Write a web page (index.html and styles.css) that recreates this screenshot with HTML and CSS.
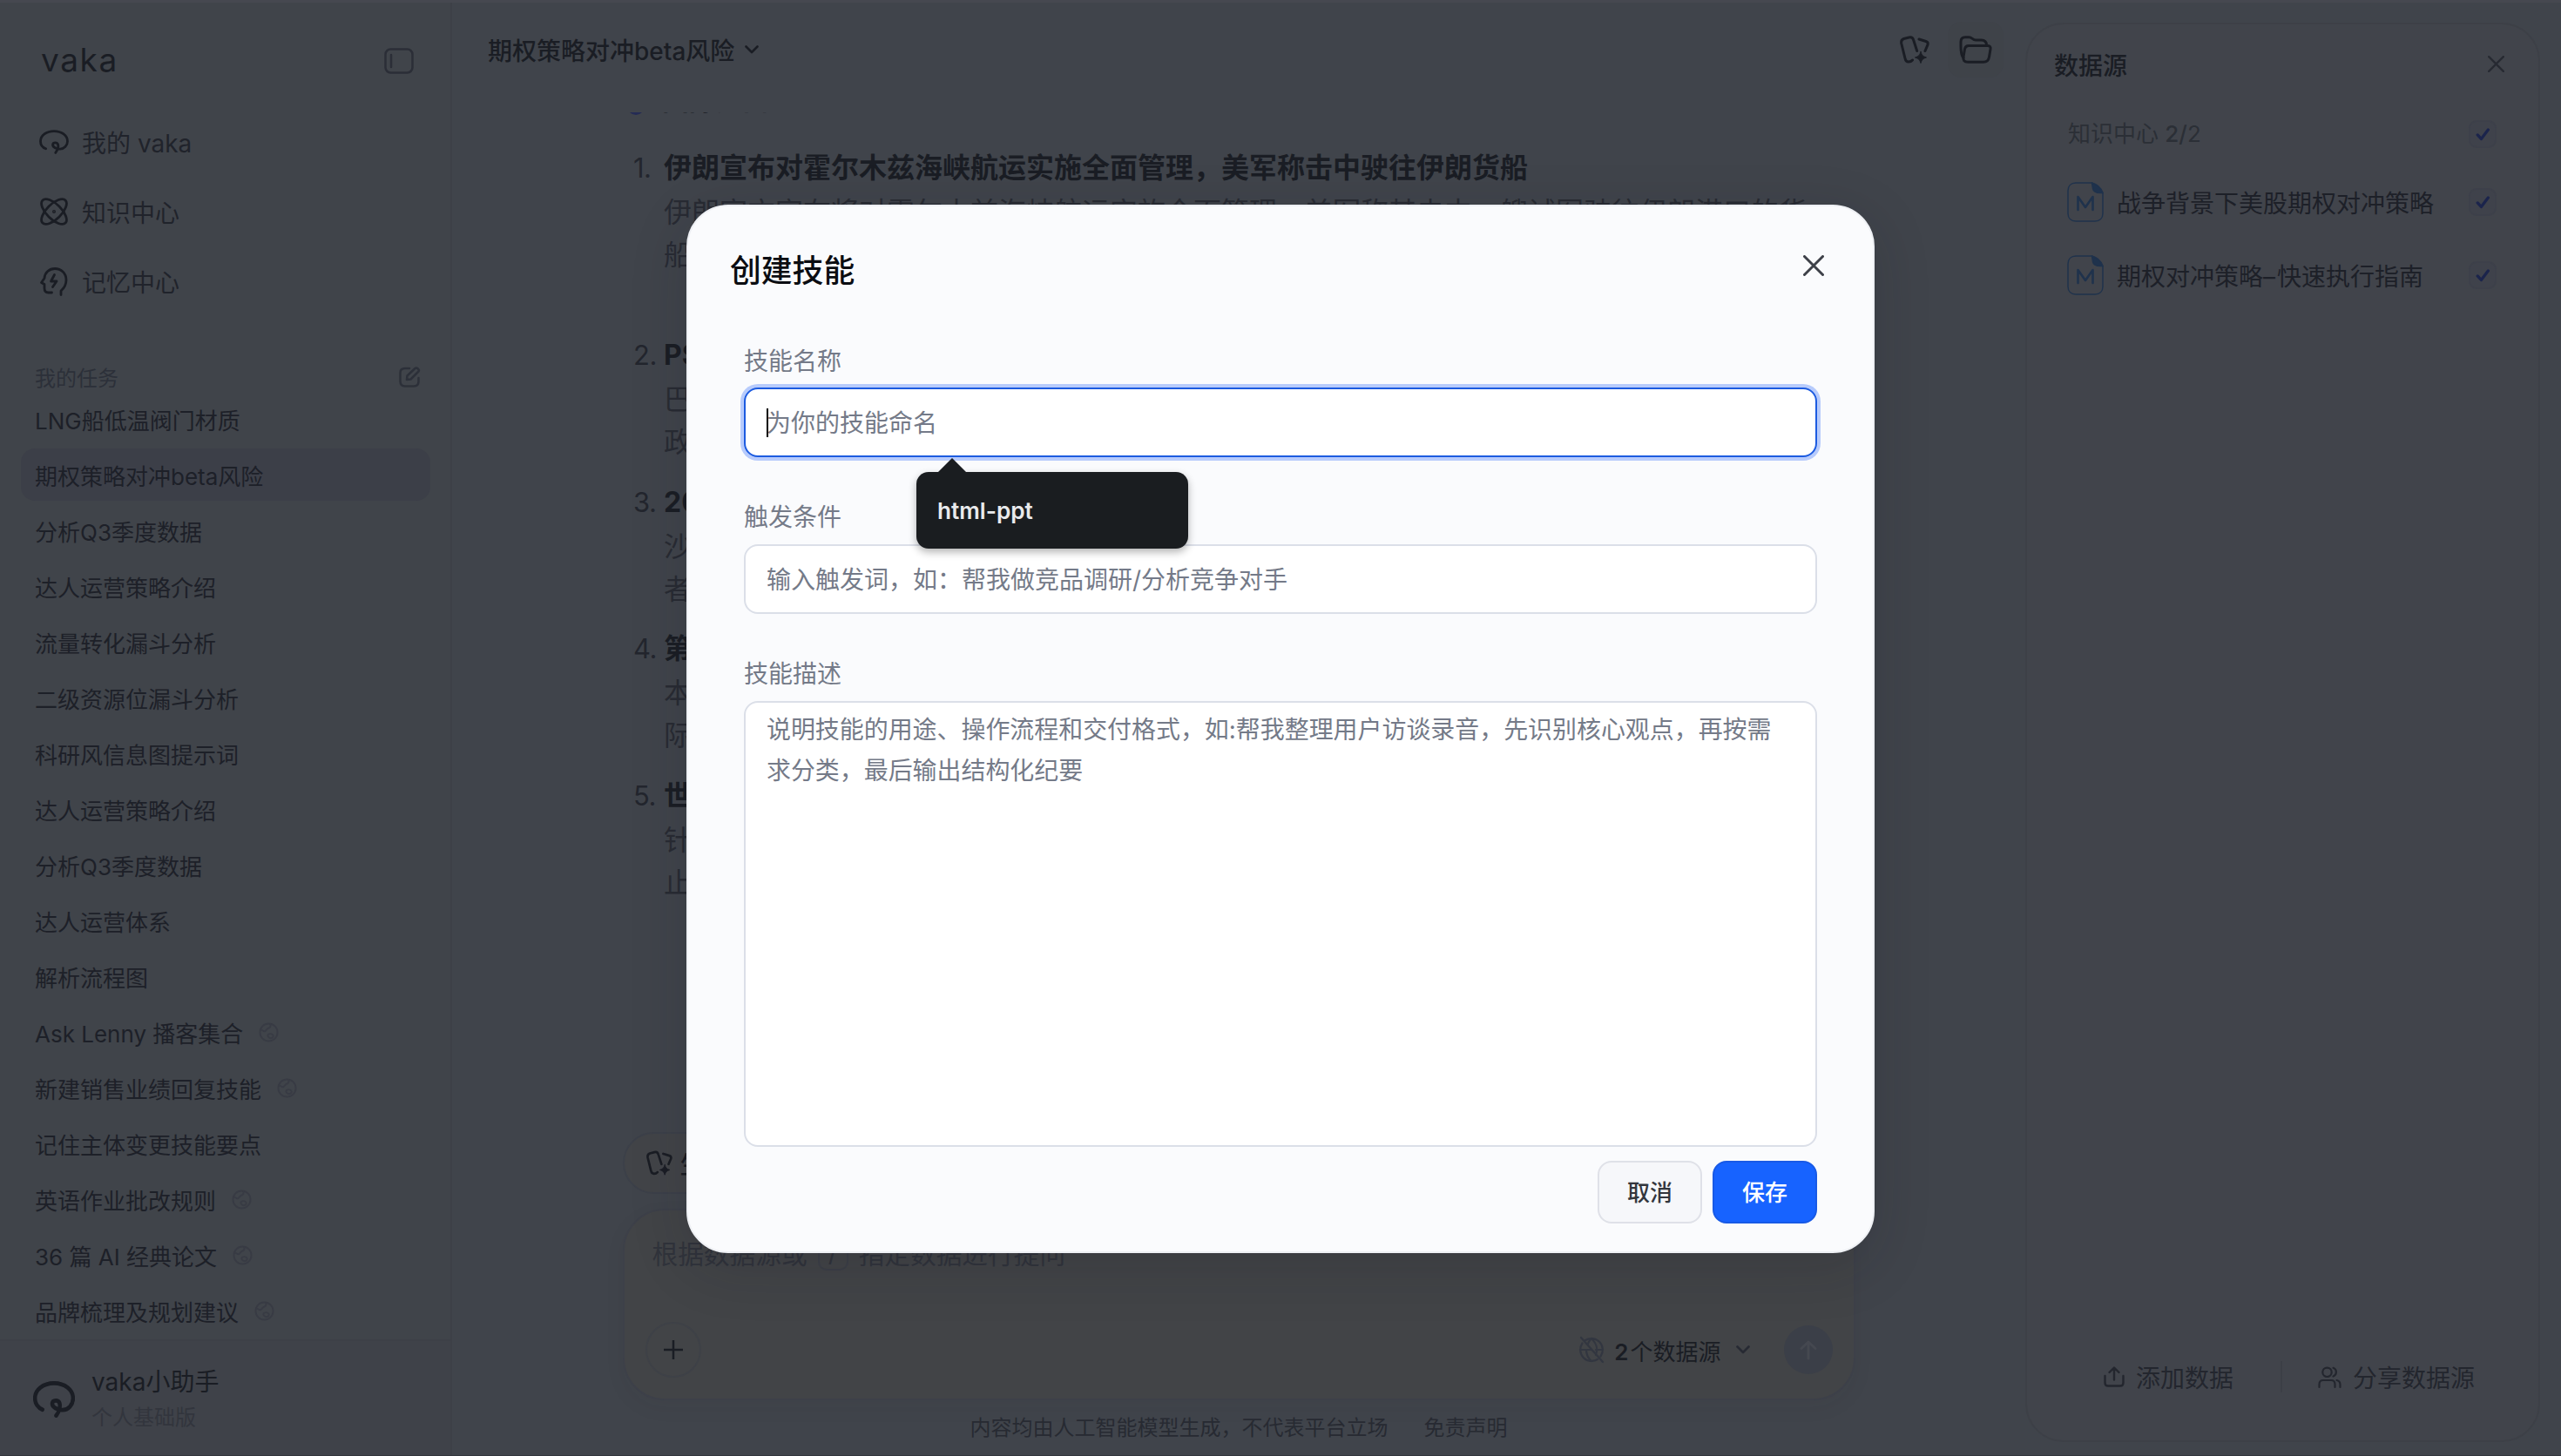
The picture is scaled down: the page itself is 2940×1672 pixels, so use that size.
FILE: index.html
```html
<!DOCTYPE html>
<html lang="zh-CN">
<head>
<meta charset="utf-8">
<title>vaka</title>
<link rel="stylesheet" href="styles.css">
</head>
<body>
<svg class="sprite" aria-hidden="true">
  <symbol id="i-logo" viewBox="0 0 34 28"><path d="M7.6 21.8C4 20.4 1.5 17 1.5 13.2 1.5 6.7 8.2 1.6 17 1.6S32.5 6.7 32.5 13.2c0 5-4 9-8.6 8.9-3.6 0-8.8-2-8.3-5.2.4-2.6 5-2.8 5.9-.1.8 2.600-.3 6.600-2.700 9.600"/></symbol>
  <symbol id="i-globe" viewBox="0 0 24 24"><circle cx="12" cy="12" r="10.500"/><path d="M2.500 9c2-.5 3 2.500 5 1.500s2-3 4-3.500 3-2 2.500-5M11 15c1.500-2 4.500-1.500 6 0s-.5 4-2.500 4-4.500-2.500-3.500-4z"/></symbol>
  <symbol id="i-cards" viewBox="0 0 34 32"><path d="M14.500 28c-1 1.200-2.500 2-4.500 2-2.500 0-3.500-1.500-4-4L1.800 9C1.300 6.500 2 4.500 4.500 3.500l6-1.500c3-.8 4.500.5 5.200 3l4 12.500M22 4l8 2.500c1.800.6 2.500 2 2 3.800L29 17.500"/><path class="spark" d="M24 18.500c1.200 4 2.300 5.200 6.500 6.500-4.200 1.300-5.300 2.500-6.500 6.500-1.200-4-2.300-5.200-6.500-6.500 4.200-1.300 5.300-2.500 6.500-6.500z"/></symbol>
  <symbol id="i-check" viewBox="0 0 20 18"><path d="M2.500 9.500l5 5.500L17 2.500"/></symbol>
  <symbol id="i-close" viewBox="0 0 24 24"><path d="M1.500 1.500l21 21M22.500 1.500l-21 21"/></symbol>
  <symbol id="i-down" viewBox="0 0 16 10"><path d="M1.500 1.500L8 8l6.500-6.500"/></symbol>
  <symbol id="i-md" viewBox="0 0 42 46"><path d="M10 1h18.500c5 2 9.500 6.500 12.500 11.500V36c0 5.500-3.500 9-9 9H10c-5.500 0-9-3.500-9-9V10c0-5.500 3.500-9 9-9z"/><path class="solid" d="M28.500 1c6 1.500 10.500 6 12.500 11.500-6 .5-11-1-11.500-5z"/><path class="m" d="M12.500 32V17l8.500 12 8.500-12v15"/></symbol>
</svg>

<div class="app">
  <aside class="sidebar">
    <div class="brand"><span class="brand-name">vaka</span>
      <svg class="icon toggle" viewBox="0 0 34 30"><rect x="1.500" y="1.500" width="31" height="27" rx="6"/><path d="M8 8v14"/></svg>
    </div>
    <nav class="nav">
      <a class="nav-item"><svg class="icon nav-icon logo"><use href="#i-logo"/></svg>我的 vaka</a>
      <a class="nav-item"><svg class="icon nav-icon" viewBox="0 0 34 32"><ellipse cx="17" cy="16" rx="18.500" ry="8.500" transform="rotate(45 17 16)"/><ellipse cx="17" cy="16" rx="18.500" ry="8.500" transform="rotate(-45 17 16)"/><circle class="solid" cx="17" cy="16" r=".6"/></svg>知识中心</a>
      <a class="nav-item"><svg class="icon nav-icon" viewBox="0 0 34 32"><path d="M25 31.500V27c4-3.500 6-8 6-12.500C31 6.500 25 1.500 18 1.500 11.500 1.500 6.500 6 6 12.500l-3.500 5 3.500 2v4.500c0 3.500 1.500 5 4.500 5h4"/><path d="M17.500 8.500l-4 7.500h6.500l-4.500 6.500"/></svg>记忆中心</a>
    </nav>
    <div class="tasks-head"><span>我的任务</span>
      <svg class="icon edit" viewBox="0 0 24 24"><path d="M12 2H7C3.500 2 1.500 4 1.500 7v10c0 3.500 2 5.500 5.500 5.500h10c3.500 0 5.500-2 5.500-5.500v-4M9 15l.5-4.500L18.500 2c2-1.500 5.500 1.500 4 3.500l-9 9z"/></svg>
    </div>
    <ul class="tasks">
      <li>LNG船低温阀门材质</li>
      <li class="active">期权策略对冲beta风险</li>
      <li>分析Q3季度数据</li>
      <li>达人运营策略介绍</li>
      <li>流量转化漏斗分析</li>
      <li>二级资源位漏斗分析</li>
      <li>科研风信息图提示词</li>
      <li>达人运营策略介绍</li>
      <li>分析Q3季度数据</li>
      <li>达人运营体系</li>
      <li>解析流程图</li>
      <li>Ask Lenny 播客集合<svg class="icon globe"><use href="#i-globe"/></svg></li>
      <li>新建销售业绩回复技能<svg class="icon globe"><use href="#i-globe"/></svg></li>
      <li>记住主体变更技能要点</li>
      <li>英语作业批改规则<svg class="icon globe"><use href="#i-globe"/></svg></li>
      <li>36 篇 AI 经典论文<svg class="icon globe"><use href="#i-globe"/></svg></li>
      <li>品牌梳理及规划建议<svg class="icon globe"><use href="#i-globe"/></svg></li>
    </ul>
    <div class="user">
      <svg class="icon avatar" viewBox="0 0 34 28" preserveAspectRatio="none"><use href="#i-logo"/></svg>
      <div><div class="user-name">vaka小助手</div><div class="user-plan">个人基础版</div></div>
    </div>
  </aside>

  <main class="main">
    <header class="topbar">
      <h1 class="topic">期权策略对冲beta风险<svg class="icon chev"><use href="#i-down"/></svg></h1>
      <div class="tools">
        <span class="tool"><svg class="icon cards"><use href="#i-cards"/></svg></span>
        <span class="tool open"><svg class="icon folder" viewBox="0 0 38 32"><path d="M5 25.500C2.500 23 2 18 2 12V7c0-3.500 1.500-5.300 5-5.300h4.500C15 1.700 15.500 5 19 5h6.500c4 0 6 2 6 6"/><path d="M11 11.500h22c2.500 0 3.500 1.500 3 4l-1.500 9c-.7 4-2.500 5.800-6.500 5.800H10c-4 0-5.700-2-5-6l1.500-9c.5-2.600 1.800-3.800 4.500-3.800z"/></svg></span>
      </div>
    </header>
    <div class="thread">
      <h2 class="cut"><i class="dot"></i>国际要闻</h2>
      <ol class="news">
        <li><b>伊朗宣布对霍尔木兹海峡航运实施全面管理，美军称击中驶往伊朗货船</b><p>伊朗官方宣布将对霍尔木兹海峡航运实施全面管理，美军称其击中一艘试图驶往伊朗港口的货<br>船</p></li>
        <li><b>PS</b><p>巴<br>政</p></li>
        <li><b>20</b><p>沙<br>者</p></li>
        <li><b>第</b><p>本<br>际</p></li>
        <li><b>世</b><p>针<br>止</p></li>
      </ol>
    </div>
    <div class="composer">
      <div class="chip"><svg class="icon chip-icon"><use href="#i-cards"/></svg>生</div>
      <div class="box">
        <div class="hint">根据数据源或<kbd>/</kbd>指定数据进行提问</div>
        <div class="box-row">
          <span class="plus"><svg class="icon" viewBox="0 0 22 22" width="22" height="22"><path d="M11 0v22M0 11h22"/></svg></span>
          <div class="box-right">
            <svg class="icon net" viewBox="0 0 30 30"><path d="M8 4A13 13 0 0 1 25.500 22.500M22 26A13 13 0 0 1 4.500 7.500M2 15h12M20 15h8M15 2v0c-2 2-3.500 4.500-4.500 7M9 15c0 5 2 9.500 6 13M15 2c8 8 7 14 5 19M3 1l25 28"/></svg>
            <span class="count"><b>2</b>个数据源</span>
            <svg class="icon chev dim"><use href="#i-down"/></svg>
            <span class="send"><svg class="icon" viewBox="0 0 20 22" width="20" height="22"><path d="M10 21V2M2 9.500L10 2l8 7.500"/></svg></span>
          </div>
        </div>
      </div>
      <div class="legal"><span>内容均由人工智能模型生成，不代表平台立场</span><span>免责声明</span></div>
    </div>
  </main>

  <aside class="panel">
    <div class="panel-head"><span>数据源</span><svg class="icon panel-close"><use href="#i-close"/></svg></div>
    <div class="row group"><span>知识中心 <em>2/</em>2</span><span class="check"><svg class="icon"><use href="#i-check"/></svg></span></div>
    <div class="row"><svg class="icon md"><use href="#i-md"/></svg><span class="doc">战争背景下美股期权对冲策略</span><span class="check"><svg class="icon"><use href="#i-check"/></svg></span></div>
    <div class="row"><svg class="icon md"><use href="#i-md"/></svg><span class="doc">期权对冲策略<span class="dash">–</span>快速执行指南</span><span class="check"><svg class="icon"><use href="#i-check"/></svg></span></div>
    <div class="panel-foot">
      <span class="act"><svg class="icon up" viewBox="0 0 24 24"><path d="M1.500 11v8c0 2.500 1 3.500 3.500 3.500h14c2.500 0 3.500-1 3.500-3.500v-8M12 15.500V2M6.500 7L12 1.500 17.500 7"/></svg>添加数据</span>
      <i class="sep"></i>
      <span class="act"><svg class="icon users" viewBox="0 0 27 25"><circle cx="10.500" cy="6.800" r="5.200"/><path d="M1.500 24v-3.500c0-3 2-4.500 4.500-4.500h9c3 0 4.500 1.500 4.500 4.500V24M17.500 1.800c4.500 1.500 4.500 8 0 9.700M21.500 16c2.500.5 4 2 4 5v3"/></svg>分享数据源</span>
    </div>
  </aside>
</div>

<div class="modal-layer">
  <section class="modal">
    <div class="modal-head"><h2>创建技能</h2><svg class="icon modal-close"><use href="#i-close"/></svg></div>
    <div class="form">
      <label>技能名称</label>
      <div class="field focus"><i class="caret"></i>为你的技能命名<div class="tip">html-ppt</div></div>
      <label class="next">触发条件</label>
      <div class="field">输入触发词，如：帮我做竞品调研/分析竞争对手</div>
      <label class="next">技能描述</label>
      <div class="field area">说明技能的用途、操作流程和交付格式，如:帮我整理用户访谈录音，先识别核心观点，再按需<br>求分类，最后输出结构化纪要</div>
      <div class="buttons"><button class="btn">取消</button><button class="btn primary">保存</button></div>
    </div>
  </section>
</div>
</body>
</html>
```
FILE: styles.css
```css
* { box-sizing: border-box; }
body {
  margin: 0;
  width: 2940px;
  height: 1672px;
  overflow: hidden;
  background: #40444b;
  color: #1a1d24;
  font-family: Inter, "Noto Sans CJK SC", sans-serif;
  font-size: 28px;
}
h1, h2, p, ul, ol { margin: 0; padding: 0; list-style: none; }
.sprite { position: absolute; width: 0; height: 0; }
.icon { fill: none; stroke: currentColor; stroke-width: 3; stroke-linecap: round; stroke-linejoin: round; flex: none; overflow: visible; }
.solid { fill: currentColor; }
.spark { fill: currentColor; stroke-width: 1; }

.app { display: flex; height: 1672px; border-top: 3px solid #464850; border-bottom: 1px solid #33363d; }

/* sidebar */
.sidebar { width: 519px; border-right: 2px solid #3d4047; background: #40444a; display: flex; flex-direction: column; }
.brand { height: 120px; padding: 14px 42px 0 47px; display: flex; align-items: center; justify-content: space-between; }
.brand-name { font-size: 37px; letter-spacing: 1.6px; margin-top: -3px; }
.toggle { width: 34px; height: 30px; color: #2b2e37; stroke-width: 2.5; }
.nav-item { height: 80px; padding-left: 45px; display: flex; align-items: center; gap: 15px; color: #20232b; }
.nav-icon { width: 34px; height: 32px; color: #1a1d24; stroke-width: 2.8; }
.nav-icon.logo { height: 28px; }
.tasks-head { height: 88px; padding: 50px 35px 0 40px; display: flex; align-items: center; justify-content: space-between; font-size: 24px; color: #2c3039; }
.edit { width: 24px; height: 24px; margin-top: 2px; stroke-width: 2.5; }
.tasks { padding: 0 23px 0 24px; display: flex; flex-direction: column; gap: 4px; font-size: 26px; height: 1087px; }
.tasks li { height: 60px; padding-left: 16px; border-radius: 16px; display: flex; align-items: center; white-space: pre; color: #1d2028; flex: none; }
.tasks li.active { background: #3c3f48; }
.globe { width: 23px; height: 23px; margin-left: 18px; color: #383b44; stroke-width: 2; }
.user { flex: 1; border-top: 2px solid #3d4047; padding: 3px 0 0 38px; display: flex; align-items: center; gap: 19px; background: #3f4249; }
.avatar { width: 48px; height: 42px; stroke-width: 3.2; }
.user-name { line-height: 42px; }
.user-plan { line-height: 40px; font-size: 24px; color: #32353d; }

/* conversation */
.main { flex: 1; display: flex; flex-direction: column; }
.topbar { height: 126px; padding: 22px 25px 0 41px; display: flex; justify-content: space-between; align-items: flex-start; }
.topic { height: 64px; display: flex; align-items: center; gap: 12px; font-size: 28px; font-weight: 500; }
.chev { width: 16px; height: 10px; stroke-width: 2.6; }
.tools { display: flex; gap: 6px; }
.tool { width: 64px; height: 64px; border-radius: 16px; display: flex; align-items: center; justify-content: center; }
.tool.open { background: #3f4349; }
.cards { width: 34px; height: 32px; }
.folder { width: 38px; height: 32px; }
.thread { height: 1171px; margin-left: 195px; overflow: hidden; }
.cut { height: 3px; margin-bottom: 36px; padding-left: 6px; display: flex; align-items: flex-end; gap: 20px; font-size: 31px; line-height: 34px; }
.dot { width: 20px; height: 20px; border-radius: 50%; background: #242b55; }
.news { counter-reset: n; font-size: 32px; }
.news li { counter-increment: n; position: relative; height: 168.5px; padding-left: 48px; color: #282b33; line-height: 49px; white-space: nowrap; }
.news li:first-child { height: 215px; }
.news li::before { content: counter(n) "."; position: absolute; left: 13px; top: 0; font-size: 31px; letter-spacing: -.5px; color: #23262e; }
.news b { display: block; height: 51px; color: #1a1d24; }
.composer { width: 1415px; margin: 0 auto; }
.chip { width: 260px; height: 71px; border: 2px solid #3c4049; border-radius: 36px; background: #424448; padding-left: 25px; display: flex; align-items: center; gap: 9px; font-weight: 500; }
.chip-icon { width: 30px; height: 29px; }
.box { height: 220px; margin-top: 17px; border: 2px solid #3d4049; border-radius: 48px; background: #424447; padding: 26px 24px 24px; display: flex; flex-direction: column; justify-content: space-between; box-shadow: 0 8px 24px rgba(30, 34, 48, .05); }
.hint { display: flex; align-items: center; height: 44px; padding-left: 8px; gap: 12px; font-size: 29.7px; color: #30333b; }
.hint kbd { width: 35px; height: 42px; border: 2px solid #3c3f47; border-radius: 10px; text-align: center; font: inherit; line-height: 38px; }
.box-row { display: flex; justify-content: space-between; align-items: center; }
.plus { width: 64px; height: 64px; border: 2px solid #3e4147; border-radius: 50%; display: flex; align-items: center; justify-content: center; }
.plus .icon { stroke-width: 2.5; stroke-linecap: butt; }
.box-right { display: flex; align-items: center; font-size: 26px; }
.net { width: 30px; height: 30px; color: #323640; stroke-width: 2.2; margin-right: 11px; }
.count b { font-weight: 600; margin-right: 2px; }
.dim { color: #272a33; margin: 0 39px 0 17px; }
.send { width: 56px; height: 56px; border-radius: 50%; background: #3b3f48; color: #454850; display: flex; align-items: center; justify-content: center; }
.legal { display: flex; justify-content: center; gap: 41px; padding-top: 13px; line-height: 38px; font-size: 24px; color: #272a32; }

/* data source panel */
.panel { width: 591px; height: 1630px; margin: 23px 24px 0 0; border: 2px solid #3d4047; border-radius: 44px; background: #41444b; padding: 0 47px; display: flex; flex-direction: column; }
.panel-head { height: 91px; margin: 0 -8px 0 -16px; display: flex; align-items: center; justify-content: space-between; font-weight: 500; }
.panel-close { width: 19px; height: 19px; color: #272a32; stroke-width: 3; }
.row { height: 84px; display: flex; align-items: center; color: #1d2028; }
.row.group { height: 71px; font-size: 26px; line-height: 32px; padding-bottom: 1px; color: #2b2f36; justify-content: space-between; }
.group em { font-style: normal; font-weight: 500; }
.md { width: 42px; height: 46px; margin: 0 15px 0 -1px; color: #1f324c; stroke-width: 1.5; }
.m { stroke-width: 2.6; }
.doc { flex: 1; white-space: nowrap; }
.dash { letter-spacing: 2px; }
.check { width: 32px; height: 32px; margin-right: 1px; border: 2px solid #3d404a; border-radius: 9px; background: #3f424b; display: flex; align-items: center; justify-content: center; color: #1b244c; }
.check .icon { width: 17px; height: 15px; stroke-width: 4; }
.panel-foot { margin-top: auto; height: 146px; padding-left: 41px; display: flex; align-items: center; color: #23262e; white-space: nowrap; }
.act { display: flex; align-items: center; gap: 13px; }
.up { width: 24px; height: 24px; stroke-width: 2.4; }
.users { width: 27px; height: 25px; stroke-width: 2.2; }
.sep { width: 2px; height: 36px; background: #3c3f46; margin: 0 41px 0 54px; }

/* create skill dialog */
.modal-layer { position: absolute; inset: 0; width: 2940px; height: 1672px; padding-top: 235px; display: flex; justify-content: center; align-items: flex-start; }
.modal { width: 1364px; height: 1204px; border: 2px solid #eef0f4; border-radius: 48px; background: #fafbfd; box-shadow: 0 16px 64px rgba(20, 22, 32, .18); }
.modal-head { height: 148px; padding: 0 56px 6px 48px; display: flex; justify-content: space-between; align-items: center; }
.modal-head h2 { font-size: 35.8px; font-weight: 500; color: #0b0d12; }
.modal-close { width: 24px; height: 24px; margin-top: -6px; color: #3d4048; }
.form { padding: 9px 64px 0; color: #747a88; }
.form label { display: block; height: 51px; line-height: 42px; }
.form label.next { height: 52px; margin-top: 48px; }
.field { position: relative; height: 80px; padding: 0 0 2px 24px; border: 2px solid #dbdfe8; border-radius: 16px; background: #fff; display: flex; align-items: center; white-space: nowrap; }
.field.focus { border-color: #1c5be0; box-shadow: 0 0 0 4px #b7cbfc; }
.caret { position: absolute; left: 24px; top: 22px; width: 2px; height: 33px; background: #000; }
.field.area { display: block; height: 512px; padding-top: 8px; line-height: 47.2px; font-size: 27.950px; }
.tip { position: absolute; z-index: 2; left: 196px; top: 95px; width: 312px; height: 88px; padding: 0 24px; border-radius: 14px; background: #1a1d20; color: #e9eaec; font-weight: 600; font-size: 26.2px; line-height: 90px; box-shadow: 0 4px 10px rgba(0, 0, 0, .3); }
.tip::before { content: ""; position: absolute; left: 24px; top: -16px; border: 17px solid transparent; border-top: 0; border-bottom-color: #1a1d20; }
.buttons { display: flex; justify-content: flex-end; gap: 12px; margin-top: 16px; }
.btn { width: 120px; height: 72px; padding: 0 0 3px; border: 2px solid #dfe1e8; border-radius: 16px; background: #f6f7fa; color: #33363d; font: 500 26px Inter, "Noto Sans CJK SC", sans-serif; }
.btn.primary { border-color: #185ae6; background: #1763ff; color: #fff; }
```
